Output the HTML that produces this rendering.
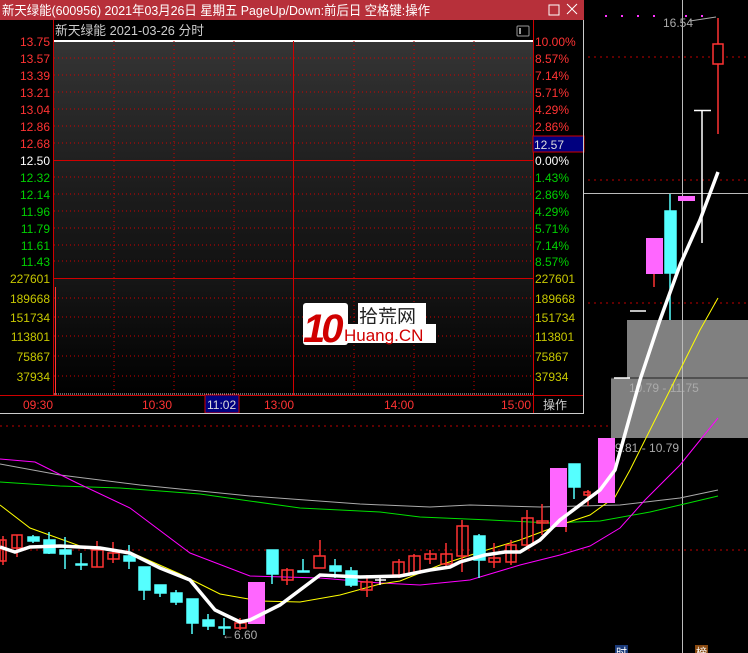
<!DOCTYPE html><html><head><meta charset="utf-8"><style>
html,body{margin:0;padding:0;background:#000;width:748px;height:653px;overflow:hidden}
svg{display:block}
text{font-family:"Liberation Sans","Noto Sans CJK SC",sans-serif}
</style></head><body>
<svg width="748" height="653" viewBox="0 0 748 653" xmlns="http://www.w3.org/2000/svg">
<rect width="748" height="653" fill="#000"/>
<g stroke="#c00000" stroke-dasharray="2 4" stroke-width="1">
<line x1="0" y1="57" x2="748" y2="57"/><line x1="0" y1="180" x2="748" y2="180"/>
<line x1="0" y1="303" x2="748" y2="303"/><line x1="0" y1="426" x2="748" y2="426"/>
<line x1="0" y1="550" x2="748" y2="550"/>
</g>
<g fill="#ff33ff"><rect x="605" y="15" width="2" height="2"/><rect x="621" y="15" width="2" height="2"/><rect x="637" y="15" width="2" height="2"/><rect x="653" y="15" width="2" height="2"/><rect x="685" y="15" width="2" height="2"/><rect x="701" y="15" width="2" height="2"/></g>
<rect x="627" y="320" width="121" height="58" fill="#808080"/>
<rect x="611" y="378" width="137" height="60" fill="#808080"/>
<line x1="611" y1="378" x2="748" y2="378" stroke="#222"/>
<text x="629" y="392" font-size="12" fill="#aaa">10.79 - 11.75</text>
<text x="615" y="452" font-size="12" fill="#aaa">9.81 - 10.79</text>
<line x1="682.5" y1="0" x2="682.5" y2="653" stroke="#bbb"/>
<line x1="583" y1="193.5" x2="748" y2="193.5" stroke="#bbb"/>
<g fill="none">
<polyline stroke="#aaa" stroke-width="1" points="0,464 60,475 140,485 250,496 360,504 430,507 470,505 540,507 620,505 680,498 718,490"/>
<polyline stroke="#00e000" stroke-width="1" points="0,482 60,486 120,488 200,494 300,508 380,512 420,517 490,520 550,523 600,521 650,512 680,505 718,496"/>
<polyline stroke="#ff00ff" stroke-width="1" points="0,459 35,462 75,482 130,508 190,553 250,576 320,578 380,583 420,585 470,580 520,565 560,555 590,546 620,528 645,500 680,465 718,418"/>
<polyline stroke="#ffff00" stroke-width="1" points="0,505 30,528 80,546 130,552 180,574 220,594 260,601 300,602 340,595 380,584 400,581 440,565 480,552 520,540 560,525 590,515 615,497 630,470 650,430 680,370 700,330 718,298"/>
</g>
<g stroke="#ff3333" stroke-width="1.5" fill="none">
<line x1="3" y1="536" x2="3" y2="565"/><rect x="0" y="540" width="6" height="21"/>
<line x1="17" y1="535" x2="17" y2="557"/><rect x="12" y="535" width="10" height="13"/>
<line x1="97" y1="541" x2="97" y2="567"/><rect x="92" y="550" width="11" height="17"/>
<line x1="113" y1="542" x2="113" y2="563"/><rect x="108" y="553" width="11" height="6"/>
<line x1="240" y1="618" x2="240" y2="630"/><rect x="235" y="623" width="11" height="5"/>
<line x1="287" y1="568" x2="287" y2="585"/><rect x="282" y="570" width="11" height="10"/>
<line x1="320" y1="540" x2="320" y2="556"/><rect x="314" y="556" width="11" height="12"/>
<line x1="367" y1="575" x2="367" y2="597"/><rect x="361" y="582" width="11" height="8"/>
<line x1="399" y1="559" x2="399" y2="578"/><rect x="393" y="562" width="11" height="13"/>
<line x1="414" y1="554" x2="414" y2="575"/><rect x="409" y="556" width="11" height="17"/>
<line x1="430" y1="550" x2="430" y2="564"/><rect x="425" y="554" width="11" height="5"/>
<line x1="446" y1="543" x2="446" y2="566"/><rect x="441" y="554" width="11" height="10"/>
<line x1="462" y1="520" x2="462" y2="572"/><rect x="457" y="526" width="11" height="30"/>
<line x1="494" y1="543" x2="494" y2="568"/><rect x="489" y="558" width="11" height="4"/>
<line x1="511" y1="540" x2="511" y2="565"/><rect x="506" y="545" width="10" height="17"/>
<line x1="527" y1="510" x2="527" y2="548"/><rect x="522" y="518" width="11" height="27"/>
<line x1="542" y1="504" x2="542" y2="535"/><rect x="537" y="521" width="11" height="2"/>
<line x1="588" y1="490" x2="588" y2="506"/><rect x="584" y="492" width="6" height="3"/>
<line x1="718" y1="18" x2="718" y2="134"/><rect x="713" y="44" width="10" height="20" fill="#000"/>
<line x1="654" y1="274" x2="654" y2="287"/><line x1="566" y1="527" x2="566" y2="532"/>
</g>
<g fill="#55ffff" stroke="#55ffff" stroke-width="1.5">
<line x1="33" y1="535" x2="33" y2="543"/><rect x="28" y="537" width="11" height="4"/>
<line x1="49" y1="532" x2="49" y2="554"/><rect x="44" y="540" width="11" height="13"/>
<line x1="65" y1="537" x2="65" y2="569"/><rect x="60" y="550" width="11" height="4"/>
<line x1="81" y1="553" x2="81" y2="570"/><rect x="76" y="564" width="11" height="1"/>
<line x1="129" y1="545" x2="129" y2="569"/><rect x="124" y="556" width="11" height="5"/>
<line x1="144" y1="567" x2="144" y2="600"/><rect x="139" y="567" width="11" height="23"/>
<line x1="160" y1="585" x2="160" y2="597"/><rect x="155" y="585" width="11" height="8"/>
<line x1="176" y1="590" x2="176" y2="605"/><rect x="171" y="593" width="11" height="9"/>
<line x1="192" y1="599" x2="192" y2="634"/><rect x="187" y="599" width="11" height="24"/>
<line x1="208" y1="614" x2="208" y2="630"/><rect x="203" y="620" width="11" height="6"/>
<line x1="224" y1="618" x2="224" y2="635"/><rect x="219" y="627" width="11" height="1"/>
<line x1="272" y1="550" x2="272" y2="584"/><rect x="267" y="550" width="11" height="24"/>
<line x1="303" y1="559" x2="303" y2="572"/><rect x="298" y="571" width="11" height="1"/>
<line x1="335" y1="559" x2="335" y2="578"/><rect x="330" y="566" width="11" height="5"/>
<line x1="351" y1="567" x2="351" y2="587"/><rect x="346" y="571" width="11" height="14"/>
<line x1="479" y1="534" x2="479" y2="578"/><rect x="474" y="536" width="11" height="24"/>
<line x1="574" y1="464" x2="574" y2="499"/><rect x="569" y="464" width="11" height="23"/>
<line x1="670" y1="194" x2="670" y2="320"/><rect x="665" y="211" width="11" height="62"/>
</g>
<g fill="#ff66ff">
<rect x="248" y="582" width="17" height="42"/>
<rect x="550" y="468" width="17" height="59"/>
<rect x="598" y="438" width="17" height="65"/>
<rect x="646" y="238" width="17" height="36"/>
<rect x="678" y="196" width="17" height="5"/>
</g>
<g stroke="#fff" stroke-width="1.5">
<line x1="702" y1="111" x2="702" y2="243"/><line x1="694" y1="110.5" x2="711" y2="110.5"/>
<line x1="630" y1="311" x2="646" y2="311"/><line x1="614" y1="378" x2="630" y2="378"/>
<line x1="375" y1="580" x2="386" y2="580"/><line x1="380" y1="576" x2="380" y2="585"/>
</g>
<polyline fill="none" stroke="#fff" stroke-width="3.5" points="0,547 15,552 30,547 60,546 100,548 130,553 160,568 190,580 215,610 240,622 250,620 280,605 320,575 360,577 400,576 430,570 450,567 460,562 485,555 505,552 520,552 540,540 560,520 580,505 600,490 615,470 640,380 660,320 680,265 700,220 718,172"/>
<text x="222" y="639" font-size="12" fill="#aaa">←6.60</text>
<text x="663" y="27" font-size="12" fill="#aaa">16.54</text>
<line x1="690" y1="21" x2="716" y2="17" stroke="#aaa"/>
<rect x="615" y="645" width="13" height="8" fill="#1a3a7a"/><text x="616" y="656" font-size="11" fill="#fff">时</text>
<rect x="695" y="645" width="13" height="8" fill="#8a4a10"/><text x="696" y="656" font-size="11" fill="#fff">榜</text>

<defs><linearGradient id="bg" x1="0" y1="0" x2="0" y2="1">
<stop offset="0" stop-color="#353535"/><stop offset="0.2" stop-color="#2c2c2c"/><stop offset="0.45" stop-color="#222"/><stop offset="0.7" stop-color="#1a1a1a"/><stop offset="1" stop-color="#111"/></linearGradient>
<linearGradient id="bg2" x1="0" y1="0" x2="0" y2="1"><stop offset="0" stop-color="#161616"/><stop offset="1" stop-color="#000"/></linearGradient></defs>
<rect x="0" y="0" width="584" height="414" fill="#000"/>
<rect x="0" y="0" width="584" height="20" fill="#b7303a"/>
<text x="2" y="15" font-size="13" fill="#fff" textLength="428" lengthAdjust="spacingAndGlyphs">新天绿能(600956) 2021年03月26日 星期五 PageUp/Down:前后日 空格键:操作</text>
<rect x="549" y="5" width="10" height="10" fill="none" stroke="#fff"/>
<path d="M567 4 L577 14 M577 4 L567 14" stroke="#fff"/>
<text x="55" y="35" font-size="13" fill="#ccc" textLength="149" lengthAdjust="spacingAndGlyphs">新天绿能  2021-03-26 分时</text>
<rect x="517" y="26" width="12" height="10" fill="none" stroke="#999" rx="1"/><rect x="519" y="28" width="2" height="6" fill="#999"/>
<rect x="54" y="41" width="479" height="237" fill="url(#bg)"/>
<rect x="54" y="278" width="479" height="117" fill="url(#bg2)"/>
<line x1="54" y1="41" x2="533" y2="41" stroke="#fff" stroke-width="2"/>
<g stroke="#d00000" stroke-dasharray="1 3">
<line x1="54" y1="58" x2="533" y2="58"/><line x1="54" y1="75" x2="533" y2="75"/><line x1="54" y1="92" x2="533" y2="92"/><line x1="54" y1="109" x2="533" y2="109"/><line x1="54" y1="126" x2="533" y2="126"/><line x1="54" y1="143" x2="533" y2="143"/>
<line x1="54" y1="177" x2="533" y2="177"/><line x1="54" y1="194" x2="533" y2="194"/><line x1="54" y1="211" x2="533" y2="211"/><line x1="54" y1="228" x2="533" y2="228"/><line x1="54" y1="245" x2="533" y2="245"/><line x1="54" y1="261" x2="533" y2="261"/>
<line x1="54" y1="298" x2="533" y2="298"/><line x1="54" y1="317" x2="533" y2="317"/><line x1="54" y1="336" x2="533" y2="336"/><line x1="54" y1="356" x2="533" y2="356"/><line x1="54" y1="376" x2="533" y2="376"/>
<line x1="114" y1="41" x2="114" y2="395"/><line x1="174" y1="41" x2="174" y2="395"/><line x1="234" y1="41" x2="234" y2="395"/><line x1="354" y1="41" x2="354" y2="395"/><line x1="414" y1="41" x2="414" y2="395"/><line x1="474" y1="41" x2="474" y2="395"/>
</g>
<g stroke="#d00000">
<line x1="54" y1="160.5" x2="533" y2="160.5"/><line x1="54" y1="278.5" x2="533" y2="278.5"/>
<line x1="293.5" y1="41" x2="293.5" y2="395"/>
<line x1="53.5" y1="20" x2="53.5" y2="395"/><line x1="533.5" y1="20" x2="533.5" y2="413"/>
<line x1="0" y1="395.5" x2="584" y2="395.5"/>
</g>
<line x1="55.5" y1="287" x2="55.5" y2="395" stroke="#ff3333"/>
<line x1="54" y1="394" x2="533" y2="394" stroke="#ccc" stroke-dasharray="1 1"/>
<g font-size="12" fill="#ff3333" text-anchor="end">
<text x="50" y="46">13.75</text><text x="50" y="63">13.57</text><text x="50" y="80">13.39</text><text x="50" y="97">13.21</text><text x="50" y="114">13.04</text><text x="50" y="131">12.86</text><text x="50" y="148">12.68</text>
</g>
<text x="50" y="165" font-size="12" fill="#fff" text-anchor="end">12.50</text>
<g font-size="12" fill="#00d000" text-anchor="end">
<text x="50" y="182">12.32</text><text x="50" y="199">12.14</text><text x="50" y="216">11.96</text><text x="50" y="233">11.79</text><text x="50" y="250">11.61</text><text x="50" y="266">11.43</text>
</g>
<g font-size="12" fill="#c8c800" text-anchor="end">
<text x="50" y="283">227601</text><text x="50" y="303">189668</text><text x="50" y="322">151734</text><text x="50" y="341">113801</text><text x="50" y="361">75867</text><text x="50" y="381">37934</text>
</g>
<g font-size="12" fill="#ff3333">
<text x="535" y="46">10.00%</text><text x="535" y="63">8.57%</text><text x="535" y="80">7.14%</text><text x="535" y="97">5.71%</text><text x="535" y="114">4.29%</text><text x="535" y="131">2.86%</text>
</g>
<rect x="533" y="136" width="51" height="16" fill="#00007f" stroke="#d00000"/>
<text x="534" y="149" font-size="12" fill="#ddd">12.57</text>
<text x="535" y="165" font-size="12" fill="#fff">0.00%</text>
<g font-size="12" fill="#00d000">
<text x="535" y="182">1.43%</text><text x="535" y="199">2.86%</text><text x="535" y="216">4.29%</text><text x="535" y="233">5.71%</text><text x="535" y="250">7.14%</text><text x="535" y="266">8.57%</text>
</g>
<g font-size="12" fill="#c8c800">
<text x="535" y="283">227601</text><text x="535" y="303">189668</text><text x="535" y="322">151734</text><text x="535" y="341">113801</text><text x="535" y="361">75867</text><text x="535" y="381">37934</text>
</g>
<rect x="205" y="395" width="34" height="18" fill="#00007f" stroke="#d00000"/>
<g font-size="12" fill="#ff3333">
<text x="23" y="409">09:30</text><text x="142" y="409">10:30</text><text x="264" y="409">13:00</text><text x="384" y="409">14:00</text><text x="501" y="409">15:00</text>
</g>
<text x="207" y="409" font-size="12" fill="#ddd">11:02</text>
<text x="543" y="409" font-size="12" fill="#ccc">操作</text>
<line x1="0" y1="413.5" x2="584" y2="413.5" stroke="#ccc"/>
<line x1="583.5" y1="20" x2="583.5" y2="414" stroke="#ccc"/>
<rect x="303" y="303" width="45" height="42" fill="#fff" rx="3"/>
<text x="303" y="342" font-size="40" font-weight="bold" font-style="italic" fill="#d00000" letter-spacing="-4">10</text>
<rect x="358" y="303" width="68" height="24" fill="#fff"/>
<text x="359" y="323" font-size="19" fill="#222">拾荒网</text>
<rect x="343" y="324" width="93" height="19" fill="#fff"/>
<text x="344" y="341" font-size="17" fill="#d00000">Huang.CN</text>
</svg>
</body></html>
